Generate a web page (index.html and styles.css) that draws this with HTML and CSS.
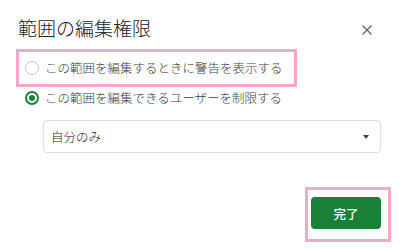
FILE: index.html
```html
<!DOCTYPE html>
<html lang="ja">
<head>
<meta charset="utf-8">
<link rel="stylesheet" href="styles.css">
</head>
<body>
<div class="dialog">
  <div class="header">
    <div class="title">範囲の編集権限</div>
    <svg class="close" width="10" height="10" viewBox="0 0 10 10"><path d="M0.5 0.5 L9.5 9.5 M9.5 0.5 L0.5 9.5" stroke="#5f6368" stroke-width="1.3" fill="none"/></svg>
  </div>
  <div class="hl hl-opt">
    <span class="radio"></span>
    <span class="label">この範囲を編集するときに警告を表示する</span>
  </div>
  <div class="opt">
    <span class="radio checked"></span>
    <span class="label">この範囲を編集できるユーザーを制限する</span>
  </div>
  <div class="select">
    <span class="sel-text">自分のみ</span>
    <span class="arrow"></span>
  </div>
  <div class="footer">
    <div class="hl hl-btn">
      <button class="done">完了</button>
    </div>
  </div>
</div>
</body>
</html>
```
FILE: styles.css
```css
* { box-sizing: border-box; }
html, body { margin: 0; padding: 0; background: #fff; }
body {
  width: 400px;
  height: 248px;
  overflow: hidden;
  font-family: "Noto Sans CJK JP", "Noto Sans", sans-serif;
  color: #3c4043;
}
.header {
  height: 49px;
  display: flex;
  justify-content: space-between;
  align-items: flex-start;
  padding: 16px 28px 0 18px;
}
.title {
  font-size: 19px;
  line-height: 24px;
  font-weight: 300;
  color: #202124;
}
.close { margin-top: 9px; }
.hl { border: 3px solid #f2a9c9; }
.hl-opt {
  margin-left: 16px;
  width: 281px;
  height: 38px;
  display: flex;
  align-items: center;
  padding-left: 6px;
}
.opt {
  height: 22px;
  display: flex;
  align-items: center;
  padding-left: 25px;
}
.radio {
  width: 14px;
  height: 14px;
  border-radius: 50%;
  border: 1px solid #c4c7c5;
  flex: none;
  position: relative;
}
.radio.checked { border: 2px solid #188038; }
.radio.checked::after {
  content: "";
  position: absolute;
  left: 2px; top: 2px;
  width: 6px; height: 6px;
  border-radius: 50%;
  background: #188038;
}
.label {
  margin-left: 6px;
  font-size: 12.5px;
  line-height: 16px;
  font-weight: 300;
  white-space: nowrap;
}
.select {
  margin: 11px 0 0 43px;
  width: 338px;
  height: 33px;
  border: 1px solid #dadce0;
  border-radius: 4px;
  display: flex;
  align-items: center;
  justify-content: space-between;
  padding: 0 11px 0 7px;
}
.sel-text { font-size: 12.5px; font-weight: 300; color: #202124; }
.arrow {
  width: 0; height: 0;
  border-left: 3.5px solid transparent;
  border-right: 3.5px solid transparent;
  border-top: 4px solid #444;
}
.footer {
  margin-top: 34px;
  display: flex;
  justify-content: flex-end;
  padding-right: 9px;
}
.hl-btn { padding: 7px 7px 10px 3px; }
.done {
  width: 70px;
  height: 32px;
  border: none;
  border-radius: 4px;
  background: #188038;
  color: #fff;
  font-family: inherit;
  font-size: 12.5px;
  font-weight: 500;
  padding: 0;
  display: block;
}
```
